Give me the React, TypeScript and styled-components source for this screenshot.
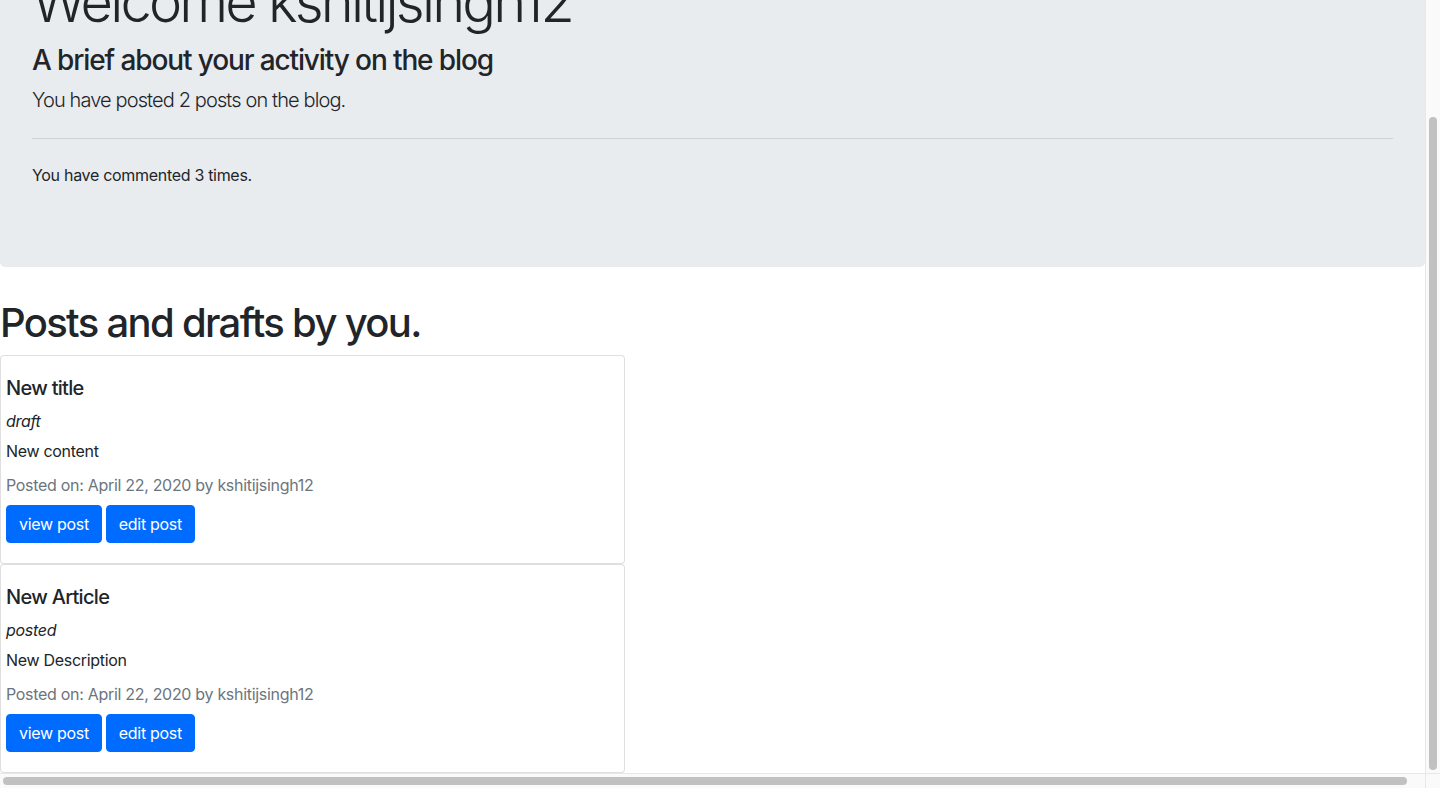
import React, { useLayoutEffect, useRef } from "react";
import styled, { createGlobalStyle } from "styled-components";

const GlobalStyle = createGlobalStyle`
  html, body {
    margin: 0;
    padding: 0;
    overflow: hidden;
    background: #ffffff;
  }
  body {
    font-family: Inter, "Noto Sans", "Liberation Sans", sans-serif;
    color: #212529;
    font-size: 16px;
    line-height: 1.5;
    letter-spacing: -0.019em;
  }
  * { box-sizing: border-box; }
`;

const Screen = styled.div`
  width: 1440px;
  height: 788px;
  display: grid;
  grid-template-columns: 1425px 15px;
  grid-template-rows: 773px 15px;
  background: #fff;
`;

const Viewport = styled.div`
  overflow: hidden;
  background: #fff;
`;

const Content = styled.div`
  width: 1425px;
  padding-bottom: 60px;
`;

const Jumbotron = styled.section`
  background: #e9ecef;
  border-radius: 4.8px;
  padding: 64px 32px;
  margin-bottom: 32px;
`;

const Display = styled.h1`
  margin: 0 0 8px;
  font-size: 56px;
  font-weight: 300;
  line-height: 1.2;
  letter-spacing: -0.05em;
`;

const Subheading = styled.h3`
  margin: 0 0 8px;
  font-size: 28px;
  font-weight: 500;
  line-height: 1.2;
  letter-spacing: -0.04em;
`;

const Lead = styled.p`
  margin: 0 0 16px;
  font-size: 20px;
  font-weight: 300;
  line-height: 28px;
  letter-spacing: -0.044em;
`;

const Divider = styled.hr`
  margin: 24px 0;
  border: 0;
  border-top: 1px solid rgba(0, 0, 0, 0.1);
  height: 0;
  box-sizing: content-box;
`;

const Text = styled.p`
  margin: 0 0 16px;
  font-size: 16px;
`;

const PageTitle = styled.h1`
  margin: 0 0 8px;
  font-size: 40px;
  font-weight: 500;
  line-height: 1.2;
  letter-spacing: -0.042em;
`;

const CardList = styled.div`
  display: flex;
  flex-direction: column;
`;

const Card = styled.article`
  width: 625px;
  border: 1px solid rgba(0, 0, 0, 0.125);
  border-radius: 4px;
  background: #fff;
`;

const CardBody = styled.div`
  padding: 20px 5px;
  display: flex;
  flex-direction: column;
  align-items: flex-start;
`;

const CardTitle = styled.h5`
  margin: 0 0 9px;
  font-size: 20px;
  font-weight: 500;
  line-height: 1.2;
  letter-spacing: -0.035em;
`;

const Status = styled.em`
  display: block;
  margin-bottom: 6px;
  font-style: italic;
  line-height: 24px;
`;

const Body = styled.p`
  margin: 0 0 10px;
  line-height: 24px;
`;

const Meta = styled.p`
  margin: 0 0 8px;
  line-height: 24px;
  color: #6c757d;
`;

const Actions = styled.div`
  display: flex;
  gap: 4px;
`;

const Button = styled.a`
  display: inline-block;
  padding: 6px 12px;
  font-size: 16px;
  line-height: 24px;
  color: #fff;
  background: #006cff;
  border: 1px solid #006cff;
  border-radius: 4px;
  text-decoration: none;
  cursor: pointer;
`;

const VTrack = styled.div`
  background: #fafafa;
  border-left: 1px solid #e8e8e8;
  padding: 117px 3px 3px 3px;
  display: flex;
`;

const VThumb = styled.div`
  flex: 1;
  background: #c1c1c1;
  border-radius: 4px;
`;

const HTrack = styled.div`
  background: #fafafa;
  border-top: 1px solid #e8e8e8;
  padding: 3px 18px 3px 3px;
  display: flex;
`;

const HThumb = styled.div`
  flex: 1;
  background: #c1c1c1;
  border-radius: 4px;
`;

const Corner = styled.div`
  background: #fafafa;
  border-top: 1px solid #e8e8e8;
  border-left: 1px solid #e8e8e8;
`;

type Post = {
  title: string;
  status: string;
  body: string;
  date: string;
  author: string;
};

const posts: Post[] = [
  { title: "New title", status: "draft", body: "New content", date: "April 22, 2020", author: "kshitijsingh12" },
  { title: "New Article", status: "posted", body: "New Description", date: "April 22, 2020", author: "kshitijsingh12" },
];

export default function App() {
  const ref = useRef<HTMLDivElement>(null);
  useLayoutEffect(() => {
    if (ref.current) ref.current.scrollTop = 95;
  }, []);

  return (
    <>
      <GlobalStyle />
      <Screen>
        <Viewport ref={ref}>
          <Content>
            <Jumbotron>
              <Display>Welcome kshitijsingh12</Display>
              <Subheading>A brief about your activity on the blog</Subheading>
              <Lead>You have posted 2 posts on the blog.</Lead>
              <Divider />
              <Text>You have commented 3 times.</Text>
            </Jumbotron>
            <PageTitle>Posts and drafts by you.</PageTitle>
            <CardList>
              {posts.map((p) => (
                <Card key={p.title}>
                  <CardBody>
                    <CardTitle>{p.title}</CardTitle>
                    <Status>{p.status}</Status>
                    <Body>{p.body}</Body>
                    <Meta>
                      Posted on: {p.date} by {p.author}
                    </Meta>
                    <Actions>
                      <Button>view post</Button>
                      <Button>edit post</Button>
                    </Actions>
                  </CardBody>
                </Card>
              ))}
            </CardList>
          </Content>
        </Viewport>
        <VTrack>
          <VThumb />
        </VTrack>
        <HTrack>
          <HThumb />
        </HTrack>
        <Corner />
      </Screen>
    </>
  );
}
